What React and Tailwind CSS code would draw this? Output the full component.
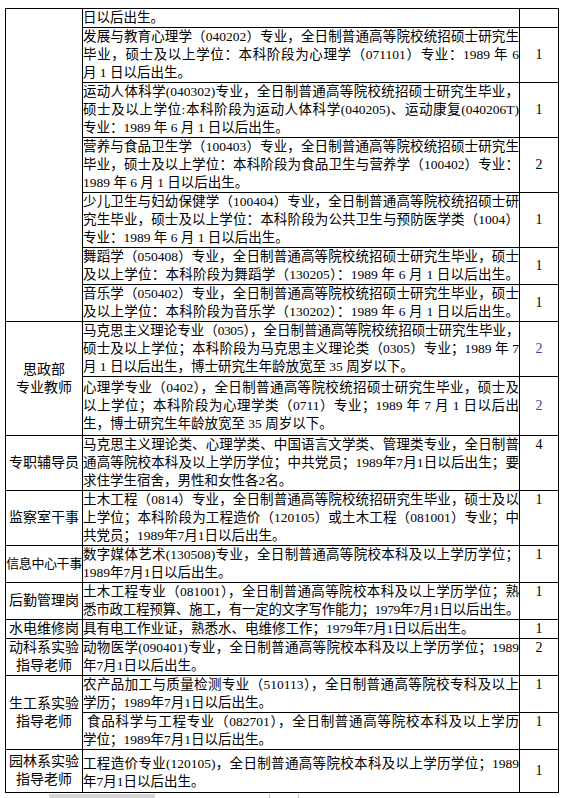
import React from "react";

const FONT = "font-['Liberation_Serif','Noto_Sans_CJK_SC',serif]";

// full: justify the last line too (it fills the cell in the source)
// tight: line indexes that need a little less letter spacing to fit
// pad: extra vertical room the source row has
const groups = [
  {
    label: [],
    rows: [
      { lines: ["日以后出生。"], num: "" },
      {
        lines: [
          "发展与教育心理学（040202）专业，全日制普通高等院校统招硕士研究生",
          "毕业，硕士及以上学位：本科阶段为心理学（071101）专业：1989 年 6",
          "月 1 日以后出生。",
        ],
        num: "1",
      },
      {
        lines: [
          "运动人体科学(040302)专业，全日制普通高等院校统招硕士研究生毕业，",
          "硕士及以上学位:本科阶段为运动人体科学(040205)、运动康复(040206T)",
          "专业：1989 年 6 月 1 日以后出生。",
        ],
        num: "1",
      },
      {
        lines: [
          "营养与食品卫生学（100403）专业，全日制普通高等院校统招硕士研究生",
          "毕业，硕士及以上学位：本科阶段为食品卫生与营养学（100402）专业：",
          "1989 年 6 月 1 日以后出生。",
        ],
        num: "2",
      },
      {
        lines: [
          "少儿卫生与妇幼保健学（100404）专业，全日制普通高等院校统招硕士研",
          "究生毕业，硕士及以上学位：本科阶段为公共卫生与预防医学类（1004）",
          "专业：1989 年 6 月 1 日以后出生。",
        ],
        num: "1",
      },
      {
        lines: [
          "舞蹈学（050408）专业，全日制普通高等院校统招硕士研究生毕业，硕士",
          "及以上学位：本科阶段为舞蹈学（130205）：1989 年 6 月 1 日以后出生。",
        ],
        num: "1",
        full: true,
      },
      {
        lines: [
          "音乐学（050402）专业，全日制普通高等院校统招硕士研究生毕业，硕士",
          "及以上学位：本科阶段为音乐学（130202）：1989 年 6 月 1 日以后出生。",
        ],
        num: "1",
        full: true,
      },
    ],
  },
  {
    label: ["思政部", "专业教师"],
    rows: [
      {
        lines: [
          "马克思主义理论专业（0305），全日制普通高等院校统招硕士研究生毕业，",
          "硕士及以上学位；本科阶段为马克思主义理论类（0305）专业；1989 年 7",
          "月 1 日以后出生，博士研究生年龄放宽至 35 周岁以下。",
        ],
        num: "2",
        blue: true,
        tight: [0],
      },
      {
        lines: [
          "心理学专业（0402），全日制普通高等院校统招硕士研究生毕业，硕士及",
          "以上学位；本科阶段为心理学类（0711）专业；1989 年 7 月 1 日以后出",
          "生，博士研究生年龄放宽至 35 周岁以下。",
        ],
        num: "2",
        blue: true,
        pad: "pt-[2px] pb-[2px]",
      },
    ],
  },
  {
    label: ["专职辅导员"],
    rows: [
      {
        lines: [
          "马克思主义理论类、心理学类、中国语言文学类、管理类专业，全日制普",
          "通高等院校本科及以上学历学位；中共党员；1989年7月1日以后出生；要",
          "求住学生宿舍，男性和女性各2名。",
        ],
        num: "4",
        top: true,
      },
    ],
  },
  {
    label: ["监察室干事"],
    rows: [
      {
        lines: [
          "土木工程（0814）专业，全日制普通高等院校统招研究生毕业，硕士及以",
          "上学位；本科阶段为工程造价（120105）或土木工程（081001）专业；中",
          "共党员；1989年7月1日以后出生。",
        ],
        num: "1",
        top: true,
      },
    ],
  },
  {
    label: ["信息中心干事"],
    narrow: true,
    rows: [
      {
        lines: [
          "数字媒体艺术(130508)专业，全日制普通高等院校本科及以上学历学位；",
          "1989年7月1日以后出生。",
        ],
        num: "1",
        top: true,
      },
    ],
  },
  {
    label: ["后勤管理岗"],
    rows: [
      {
        lines: [
          "土木工程专业（081001），全日制普通高等院校本科及以上学历学位；熟",
          "悉市政工程预算、施工，有一定的文字写作能力；1979年7月1日以后出生。",
        ],
        num: "1",
        top: true,
        full: true,
        tight: [1],
      },
    ],
  },
  {
    label: ["水电维修岗"],
    rows: [
      {
        lines: ["具有电工作业证，熟悉水、电维修工作；1979年7月1日以后出生。"],
        num: "1",
      },
    ],
  },
  {
    label: ["动科系实验", "指导老师"],
    rows: [
      {
        lines: [
          "动物医学(090401)专业，全日制普通高等院校本科及以上学历学位；1989",
          "年7月1日以后出生。",
        ],
        num: "2",
        top: true,
      },
    ],
  },
  {
    label: ["生工系实验", "指导老师"],
    rows: [
      {
        lines: [
          "农产品加工与质量检测专业（510113），全日制普通高等院校专科及以上",
          "学历；1989年7月1日以后出生。",
        ],
        num: "1",
        top: true,
      },
      {
        lines: [
          "\u00a0食品科学与工程专业（082701），全日制普通高等院校本科及以上学历",
          "学位；1989年7月1日以后出生。",
        ],
        num: "1",
        top: true,
      },
    ],
  },
  {
    label: ["园林系实验", "指导老师"],
    rows: [
      {
        lines: [
          "工程造价专业(120105)，全日制普通高等院校本科及以上学历学位；1989",
          "年7月1日以后出生。",
        ],
        num: "1",
        pad: "pt-[5px] pb-[1px]",
      },
    ],
  },
];

const Requirement = ({ row }) => (
  <div className={row.pad || ""}>
    {row.lines.map((line, i) => {
      const last = i === row.lines.length - 1;
      const justify = !last || row.full;
      const tight = row.tight && row.tight.includes(i);
      return (
        <div
          key={i}
          className={`h-[18px] whitespace-nowrap ${
            justify ? "text-justify [text-align-last:justify]" : "text-left"
          } ${tight ? "tracking-[-0.4px]" : ""}`}
        >
          {line}
        </div>
      );
    })}
  </div>
);

export default function App() {
  return (
    <div className={`w-[561px] h-[798px] overflow-hidden bg-white text-black ${FONT}`}>
      <div className="pt-[8px] pl-[5px]">
        <table className="table-fixed border-collapse w-[553px] text-[13.5px] leading-[18px]">
          <colgroup>
            <col className="w-[77px]" />
            <col className="w-[437px]" />
            <col className="w-[39px]" />
          </colgroup>
          <tbody>
            {groups.flatMap((g, gi) =>
              g.rows.map((row, ri) => (
                <tr key={`${gi}-${ri}`}>
                  {ri === 0 && (
                    <td
                      rowSpan={g.rows.length}
                      className={`border border-black p-0 text-center align-middle ${
                        g.narrow ? "text-[13px] tracking-[-0.4px]" : "text-[14px]"
                      }`}
                    >
                      {g.label.map((l) => (
                        <div key={l} className="h-[18px] whitespace-nowrap">
                          {l}
                        </div>
                      ))}
                    </td>
                  )}
                  <td className="border border-black p-0 align-top">
                    <Requirement row={row} />
                  </td>
                  <td
                    className={`border border-black p-0 text-center text-[14px] ${
                      row.top ? "align-top" : "align-middle"
                    } ${row.blue ? "text-[#2b4c9a]" : ""}`}
                  >
                    <div className="h-[18px]">{row.num}</div>
                  </td>
                </tr>
              ))
            )}
          </tbody>
        </table>
        <div className="flex items-start mt-[1px]">
          <div className="ml-[44px] w-[106px] h-[4px] bg-[#d6d6d6]" />
          <div className="ml-[114px] w-[8px] h-[4px] border-l border-[#c8c8c8]" />
          <div className="ml-[14px] w-[8px] h-[4px] border-r border-[#c8c8c8]" />
        </div>
      </div>
    </div>
  );
}
